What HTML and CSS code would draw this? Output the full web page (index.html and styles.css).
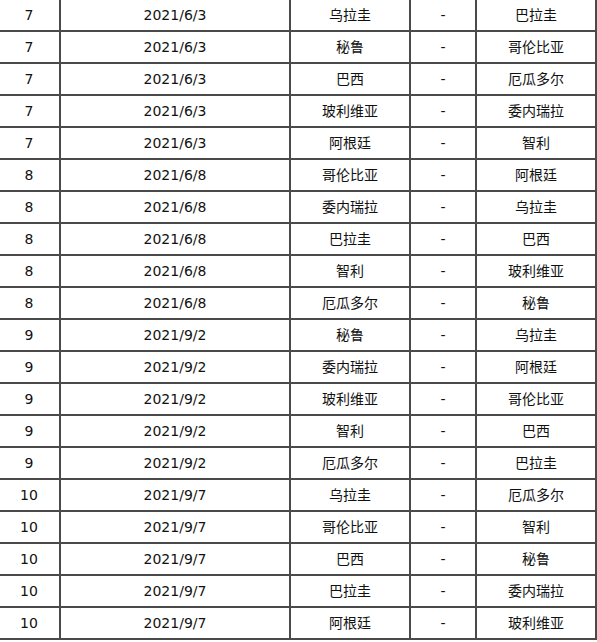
FILE: index.html
```html
<!DOCTYPE html>
<html lang="zh-CN">
<head>
<meta charset="utf-8">
<title>赛程</title>
<link rel="stylesheet" href="styles.css">
</head>
<body>
<table class="schedule">
<colgroup>
<col class="c-round"><col class="c-date"><col class="c-home"><col class="c-vs"><col class="c-away">
</colgroup>
<tbody>
<tr><td>7</td><td>2021/6/3</td><td>乌拉圭</td><td>-</td><td>巴拉圭</td></tr>
<tr><td>7</td><td>2021/6/3</td><td>秘鲁</td><td>-</td><td>哥伦比亚</td></tr>
<tr><td>7</td><td>2021/6/3</td><td>巴西</td><td>-</td><td>厄瓜多尔</td></tr>
<tr><td>7</td><td>2021/6/3</td><td>玻利维亚</td><td>-</td><td>委内瑞拉</td></tr>
<tr><td>7</td><td>2021/6/3</td><td>阿根廷</td><td>-</td><td>智利</td></tr>
<tr><td>8</td><td>2021/6/8</td><td>哥伦比亚</td><td>-</td><td>阿根廷</td></tr>
<tr><td>8</td><td>2021/6/8</td><td>委内瑞拉</td><td>-</td><td>乌拉圭</td></tr>
<tr><td>8</td><td>2021/6/8</td><td>巴拉圭</td><td>-</td><td>巴西</td></tr>
<tr><td>8</td><td>2021/6/8</td><td>智利</td><td>-</td><td>玻利维亚</td></tr>
<tr><td>8</td><td>2021/6/8</td><td>厄瓜多尔</td><td>-</td><td>秘鲁</td></tr>
<tr><td>9</td><td>2021/9/2</td><td>秘鲁</td><td>-</td><td>乌拉圭</td></tr>
<tr><td>9</td><td>2021/9/2</td><td>委内瑞拉</td><td>-</td><td>阿根廷</td></tr>
<tr><td>9</td><td>2021/9/2</td><td>玻利维亚</td><td>-</td><td>哥伦比亚</td></tr>
<tr><td>9</td><td>2021/9/2</td><td>智利</td><td>-</td><td>巴西</td></tr>
<tr><td>9</td><td>2021/9/2</td><td>厄瓜多尔</td><td>-</td><td>巴拉圭</td></tr>
<tr><td>10</td><td>2021/9/7</td><td>乌拉圭</td><td>-</td><td>厄瓜多尔</td></tr>
<tr><td>10</td><td>2021/9/7</td><td>哥伦比亚</td><td>-</td><td>智利</td></tr>
<tr><td>10</td><td>2021/9/7</td><td>巴西</td><td>-</td><td>秘鲁</td></tr>
<tr><td>10</td><td>2021/9/7</td><td>巴拉圭</td><td>-</td><td>委内瑞拉</td></tr>
<tr><td>10</td><td>2021/9/7</td><td>阿根廷</td><td>-</td><td>玻利维亚</td></tr>
</tbody>
</table>
</body>
</html>
```
FILE: styles.css
```css
html, body {
  margin: 0;
  padding: 0;
  background: #ffffff;
  overflow: hidden;
}

.schedule {
  margin: -2px 0 0 -3px;
  width: 600px;
  table-layout: fixed;
  border-collapse: separate;
  border-spacing: 0;
  border: 1px solid #4a4a4a;
  font-family: "DejaVu Sans", "Noto Sans CJK SC", sans-serif;
  font-size: 14px;
  color: #111;
}

.c-round { width: 62px; }
.c-date { width: 230px; }
.c-home { width: 120px; }
.c-vs { width: 66px; }
.c-away { width: 120px; }

.schedule td {
  box-sizing: border-box;
  height: 32px;
  padding: 0;
  border: 1px solid #4a4a4a;
  text-align: center;
  vertical-align: middle;
  line-height: 20px;
}
```
